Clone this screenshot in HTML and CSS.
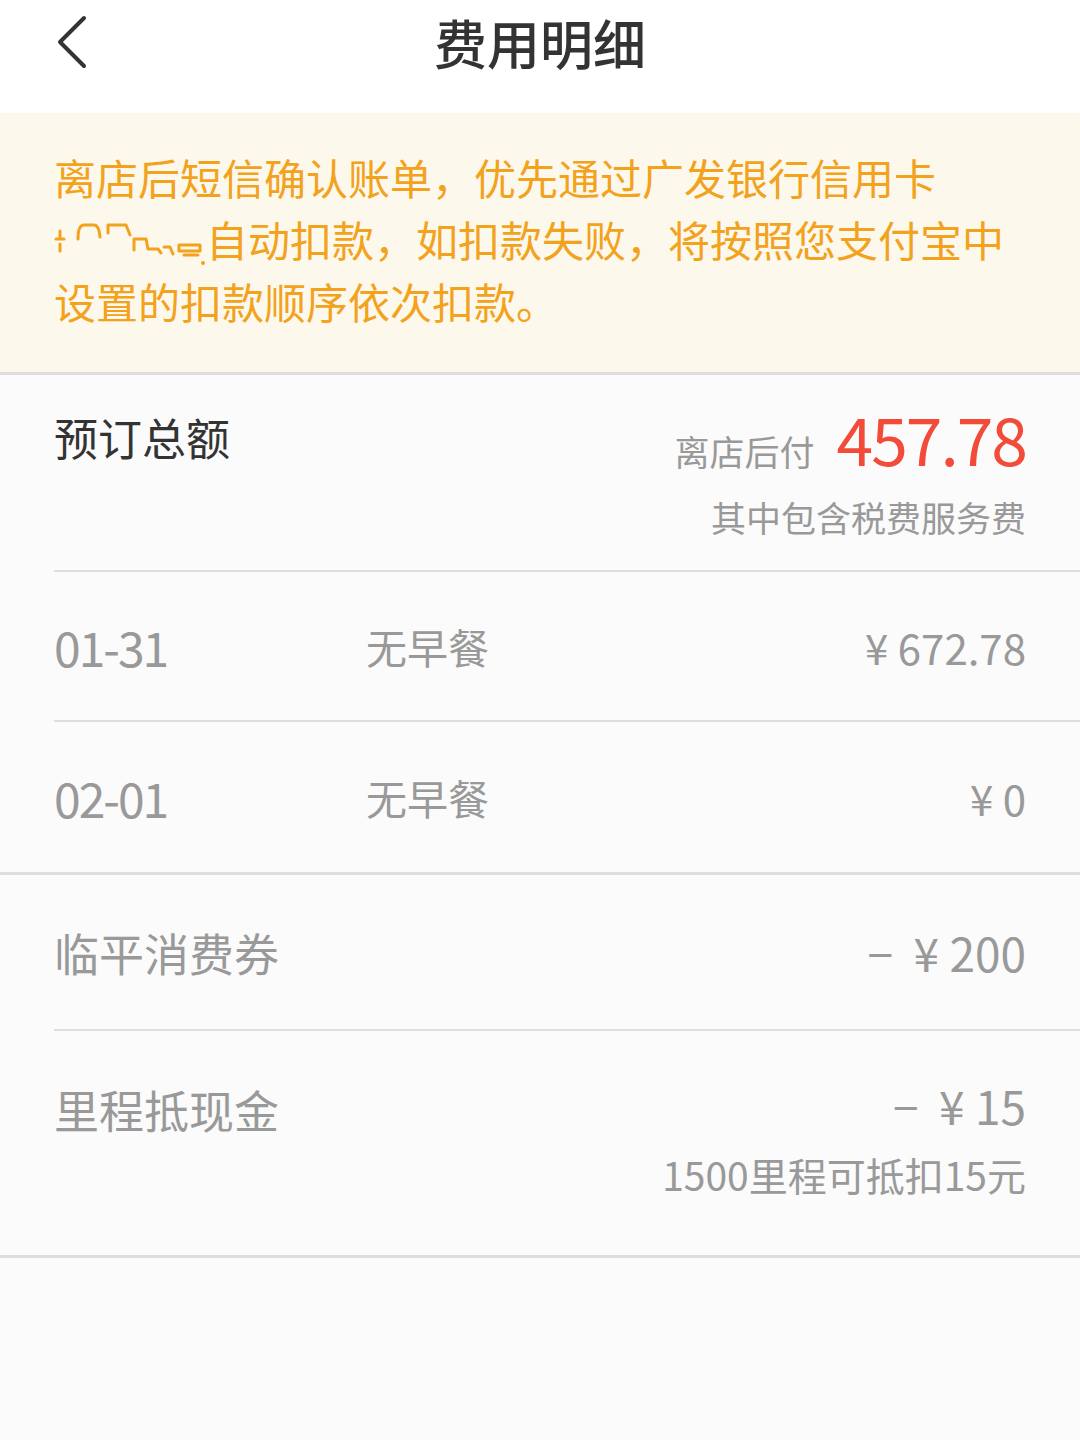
FILE: index.html
```html
<!DOCTYPE html>
<html>
<head>
    <title>费用明细</title>
    <link rel="stylesheet" href="styles.css">
</head>
<body>
    <div class="topbar">
        <a class="back" href="#">
            <svg width="40" height="56" viewBox="0 0 40 56"><path d="M31 4 L7 28 L31 52" fill="none" stroke="#333" stroke-width="4" stroke-linecap="round" stroke-linejoin="round"/></svg>
        </a>
        <h1>费用明细</h1>
    </div>
    <div class="notice">
        离店后短信确认账单，优先通过广发银行信用卡<svg class="masked" width="152" height="50" viewBox="0 0 152 50"><g fill="none" stroke="#f2a21c" stroke-width="3" stroke-linecap="round" stroke-linejoin="round"><path d="M2 22 H10 M6 14 V20 M6 27 V34"/><path d="M24 22 Q24 8 30 8 H40 Q45 8 46 20"/><path d="M54 16 V8 H72 L76 18"/><path d="M80 33 V22 H92 L94 32 H104 L107 36"/><path d="M110 30 H116 L119 37"/><path d="M125 28 H146 V34 H125 Z M130 38 H144"/></g><circle cx="149" cy="46" r="2" fill="#f2a21c"/></svg>自动扣款，如扣款失败，将按照您支付宝中设置的扣款顺序依次扣款。
    </div>
    <div class="section">
        <div class="row total">
            <div class="label">预订总额</div>
            <div class="total-right">
                <div class="pay"><span class="pay-when">离店后付</span><span class="amount">457.78</span></div>
                <div class="note">其中包含税费服务费</div>
            </div>
        </div>
        <div class="row day">
            <span class="date">01-31</span>
            <span class="meal">无早餐</span>
            <span class="price">¥ 672.78</span>
        </div>
        <div class="row day">
            <span class="date">02-01</span>
            <span class="meal">无早餐</span>
            <span class="price">¥ 0</span>
        </div>
    </div>
    <div class="section">
        <div class="row discount">
            <span class="name">临平消费券</span>
            <span class="minus">−&nbsp; ¥ 200</span>
        </div>
        <div class="row discount mileage">
            <span class="name">里程抵现金</span>
            <div class="mileage-right">
                <div class="minus">−&nbsp; ¥ 15</div>
                <div class="sub">1500里程可抵扣15元</div>
            </div>
        </div>
    </div>
</body>
</html>
```

FILE: styles.css
```css
* { margin: 0; padding: 0; box-sizing: border-box; font-family: "Noto Sans CJK SC", "Noto Sans", sans-serif; }
body { background: #fbfbfb; color: #999; min-height: 1440px; }
.topbar { height: 113px; background: #fff; display: flex; align-items: center; justify-content: center; position: relative; }
.topbar h1 { font-size: 53px; font-weight: 500; color: #333; margin-top: -30px; }
.back { position: absolute; left: 53px; top: 14px; display: block; }
.notice { background: #fdf8ec; color: #f2a21c; font-size: 42px; line-height: 62px; padding: 33px 54px 40px; border-bottom: 3px solid #dedede; }
.masked { vertical-align: -10px; }
.section { border-bottom: 3px solid #dedede; }
.row { margin-left: 54px; padding-right: 54px; display: flex; align-items: center; border-bottom: 2px solid #dedede; }
.row:last-child { border-bottom: none; }
.total { height: 197px; align-items: flex-start; justify-content: space-between; padding-top: 34px; }
.total .label { font-size: 44px; color: #333; line-height: 56px; }
.total-right { text-align: right; }
.pay { display: flex; align-items: baseline; justify-content: flex-end; height: 64px; }
.pay-when { font-size: 35px; color: #999; margin-right: 22px; }
.amount { font-size: 66px; color: #f24b3a; letter-spacing: -2px; line-height: 56px; }
.note { font-size: 35px; line-height: 44px; margin-top: 22px; }
.day { height: 150px; }
.date { font-size: 48px; letter-spacing: -2px; width: 312px; }
.meal { font-size: 41px; flex: 1; }
.price { font-size: 42px; }
.discount { height: 156px; justify-content: space-between; }
.name { font-size: 45px; }
.minus { font-size: 46px; }
.mileage { height: 224px; align-items: flex-start; padding-top: 46px; }
.mileage-right { text-align: right; }
.mileage .minus { line-height: 56px; }
.sub { font-size: 39px; line-height: 50px; margin-top: 16px; }
```
